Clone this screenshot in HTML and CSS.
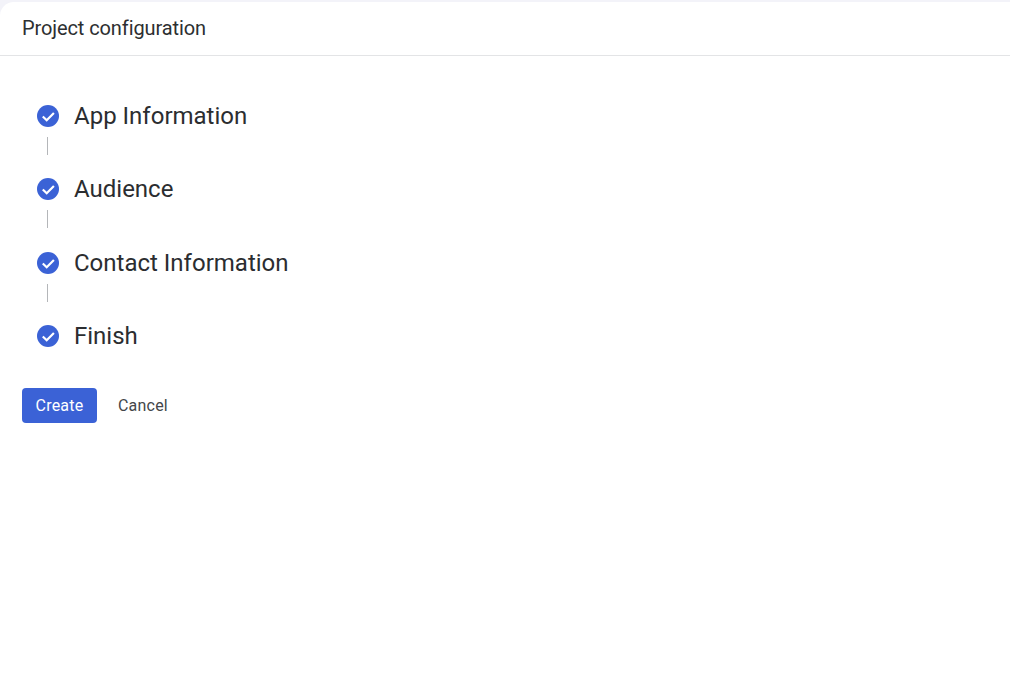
FILE: index.html
```html
<!DOCTYPE html>
<html lang="en">
<head>
    <meta charset="UTF-8">
    <meta name="viewport" content="width=device-width, initial-scale=1.0">
    <title>Project configuration</title>
    <link rel="stylesheet" href="styles.css">
</head>
<body>
    <div class="panel">
        <div class="panel-header">Project configuration</div>
        <ul class="steps">
            <li class="step">
                <svg class="step-icon" viewBox="0 0 22 22"><circle cx="11" cy="11" r="11" fill="#3b62d6"/><path d="M5.8 11.5l3.9 3.8 7.2-7.3" fill="none" stroke="#fff" stroke-width="2.2"/></svg>
                <span>App Information</span>
            </li>
            <li class="connector"></li>
            <li class="step">
                <svg class="step-icon" viewBox="0 0 22 22"><circle cx="11" cy="11" r="11" fill="#3b62d6"/><path d="M5.8 11.5l3.9 3.8 7.2-7.3" fill="none" stroke="#fff" stroke-width="2.2"/></svg>
                <span>Audience</span>
            </li>
            <li class="connector"></li>
            <li class="step">
                <svg class="step-icon" viewBox="0 0 22 22"><circle cx="11" cy="11" r="11" fill="#3b62d6"/><path d="M5.8 11.5l3.9 3.8 7.2-7.3" fill="none" stroke="#fff" stroke-width="2.2"/></svg>
                <span>Contact Information</span>
            </li>
            <li class="connector"></li>
            <li class="step">
                <svg class="step-icon" viewBox="0 0 22 22"><circle cx="11" cy="11" r="11" fill="#3b62d6"/><path d="M5.8 11.5l3.9 3.8 7.2-7.3" fill="none" stroke="#fff" stroke-width="2.2"/></svg>
                <span>Finish</span>
            </li>
        </ul>
        <div class="actions">
            <button class="create-button">Create</button>
            <button class="cancel-button">Cancel</button>
        </div>
    </div>
</body>
</html>
```
FILE: styles.css
```css
body {
    font-family: Roboto, "Liberation Sans", sans-serif;
    margin: 0;
    height: 700px;
    overflow: hidden;
    background-color: #f3f3f9;
}
.panel {
    margin-top: 2px;
    height: 698px;
    background-color: #fff;
    border-top-left-radius: 14px;
}
.panel-header {
    height: 54px;
    box-sizing: border-box;
    padding-left: 22px;
    line-height: 53px;
    font-size: 20px;
    letter-spacing: -0.1px;
    color: #2d2f31;
    border-bottom: 1px solid #e3e4e6;
}
.steps {
    list-style: none;
    margin: 0;
    padding: 42px 0 0 37px;
}
.step {
    display: flex;
    align-items: center;
    gap: 15px;
    height: 36px;
    font-size: 24px;
    color: #2b2d30;
}
.step-icon {
    width: 22px;
    height: 22px;
}
.connector {
    width: 1px;
    height: 18px;
    margin: 3px 0 16.3px 9.5px;
    background-color: #b4b6b9;
}
.actions {
    display: flex;
    align-items: center;
    gap: 21px;
    margin: 34px 0 0 22px;
}
.create-button, .cancel-button {
    font-family: inherit;
    font-size: 16px;
    letter-spacing: 0.2px;
    border: none;
    cursor: pointer;
    padding: 0;
}
.create-button {
    width: 75px;
    height: 35px;
    background-color: #3b62d6;
    color: #fff;
    border-radius: 4px;
}
.cancel-button {
    background: none;
    color: #444649;
}
```
